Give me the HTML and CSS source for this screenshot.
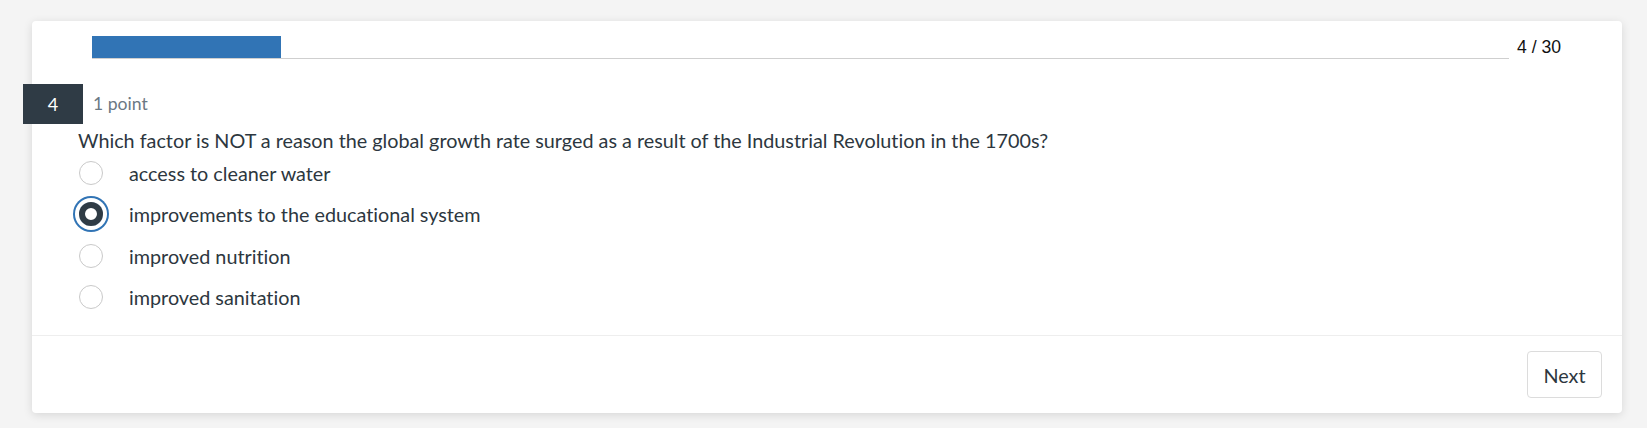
FILE: index.html
```html
<!DOCTYPE html>
<html>
<head>
<meta charset="utf-8">
<link rel="stylesheet" href="styles.css">
</head>
<body>
<div class="card">
  <div class="progress-row">
    <div class="track"><div class="fill" style="width:189px"></div></div>
    <div class="count">4 / 30</div>
  </div>
  <div class="question">
    <div class="badge">4</div>
    <div class="points">1 point</div>
    <div class="qtext">Which factor is NOT a reason the global growth rate surged as a result of the Industrial Revolution in the 1700s?</div>
    <ul class="options">
      <li class="option"><span class="radio"></span><span class="label">access to cleaner water</span></li>
      <li class="option selected"><span class="radio"></span><span class="label">improvements to the educational system</span></li>
      <li class="option"><span class="radio"></span><span class="label">improved nutrition</span></li>
      <li class="option"><span class="radio"></span><span class="label">improved sanitation</span></li>
    </ul>
  </div>
  <div class="footer">
    <button class="next">Next</button>
  </div>
</div>
</body>
</html>
```

FILE: styles.css
```css
html, body {
  margin: 0;
  padding: 0;
  background: #f4f4f4;
}
body {
  padding: 21px 25px 14px 32px;
  font-family: Lato, "Open Sans", sans-serif;
  font-variant-ligatures: none;
  color: #2d3740;
}
.card {
  position: relative;
  background: #fff;
  border-radius: 4px;
  box-shadow: 0 2px 10px rgba(0,0,0,0.12);
  display: flex;
  flex-direction: column;
}
.progress-row {
  display: flex;
  align-items: flex-end;
  padding: 15px 0 0 60px;
  height: 23px;
}
.track {
  width: 1417px;
  height: 22px;
  border-bottom: 1px solid #cfcfcf;
}
.fill {
  height: 22px;
  background: #3174b5;
}
.count {
  margin-left: 8px;
  font-family: "Liberation Sans", Arial, sans-serif;
  font-size: 17.6px;
  color: #111;
  line-height: 20px;
  margin-bottom: 2px;
}
.question {
  padding: 33px 0 18px 46px;
  border-bottom: 1px solid #eeeeee;
}
.badge {
  position: absolute;
  left: -9px;
  top: 63px;
  width: 60px;
  height: 40px;
  background: #2f3b45;
  color: #fff;
  font-size: 18px;
  line-height: 40px;
  text-align: center;
}
.points {
  padding-left: 15px;
  font-size: 17.6px;
  color: #6b7884;
  line-height: 24px;
}
.qtext {
  font-size: 19.8px;
  line-height: 24px;
  color: #2d3740;
  margin-top: 12px;
}
.options {
  list-style: none;
  margin: 0;
  padding: 0;
}
.option {
  display: flex;
  align-items: center;
  height: 41px;
}
.option.selected {
  height: 42px;
}
.radio {
  box-sizing: border-box;
  width: 24px;
  height: 24px;
  border-radius: 50%;
  border: 1px solid #c9c9c9;
  margin-left: 1px;
  margin-right: 26px;
  flex: none;
}
.option.selected .radio {
  border: 6px solid #2f3b45;
  box-shadow: 0 0 0 4px #fff, 0 0 0 6px #3174b5;
}
.label {
  font-size: 19.8px;
  color: #2d3740;
}
.footer {
  display: flex;
  justify-content: flex-end;
  padding: 15px 20px 15px 0;
}
.next {
  width: 75px;
  height: 47px;
  background: #fff;
  border: 1px solid #dcdcdc;
  border-radius: 4px;
  font-family: Lato, sans-serif;
  font-variant-ligatures: none;
  font-size: 19.8px;
  color: #2d3740;
  padding: 0;
}
```
